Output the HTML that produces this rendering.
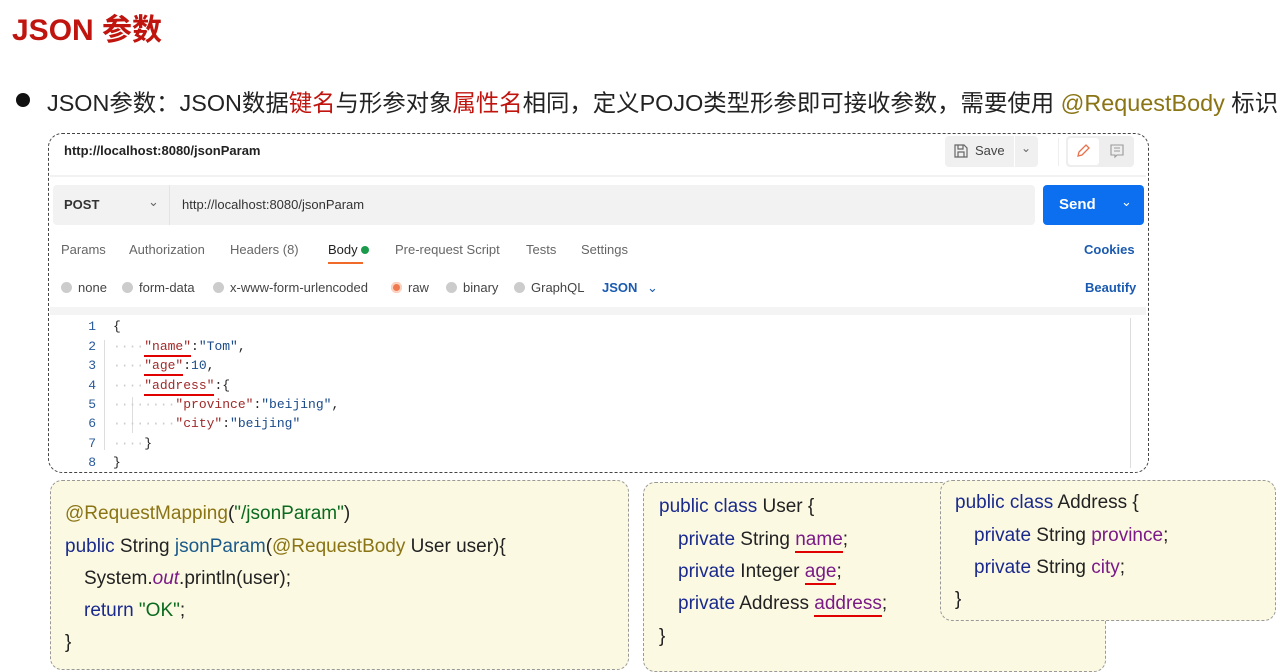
<!DOCTYPE html>
<html><head><meta charset="utf-8"><style>
*{margin:0;padding:0;box-sizing:border-box}
body{width:1287px;height:658px;background:#fff;position:relative;overflow:hidden;font-family:"Liberation Sans","Noto Sans CJK SC",sans-serif;color:#222}
.a{position:absolute;white-space:nowrap}
.mono{font-family:"Liberation Mono","DejaVu Sans Mono",monospace;font-size:13px}
.k{color:#1a2a8c}.an{color:#8a7414}.s{color:#0a6a1e}.p{color:#7b1a86}
.ul{border-bottom:2px solid #e00000;padding-bottom:1px}
.code{font-size:19px;color:#222}
.box{position:absolute;background:#fcf9e3;border:1px dashed #999;border-radius:12px}
.tab{position:absolute;top:242px;font-size:13px;color:#666}
.rad{position:absolute;top:280px;font-size:13px;color:#444}
.rad i{display:inline-block;width:11px;height:11px;border-radius:50%;background:#ccc;margin-right:6px;vertical-align:-1px}
.ln{position:absolute;left:76px;width:20px;text-align:right;color:#2a5a9a}
.jk{color:#a12a2a}.jv{color:#1a4a8a}.dot{color:#ccc}
</style></head><body>
<div class="a" style="left:12px;top:5px;font-size:30px;font-weight:bold;color:#c0140e">JSON 参数</div>
<div class="a" style="left:16px;top:93px;width:14px;height:14px;border-radius:50%;background:#111"></div>
<div class="a" style="left:47px;top:84px;font-size:23.4px;color:#222">JSON参数：JSON数据<span style="color:#c0140e">键名</span>与形参对象<span style="color:#c0140e">属性名</span>相同，定义POJO类型形参即可接收参数，需要使用 <span style="color:#8a7414">@RequestBody</span> 标识</div>

<div class="a" style="left:48px;top:133px;width:1101px;height:340px;border:1px dashed #444;border-radius:14px"></div>
<div class="a" style="left:64px;top:143px;font-size:13px;font-weight:bold;color:#222">http://localhost:8080/jsonParam</div>
<div class="a" style="left:945px;top:136px;width:93px;height:31px;background:#f0f0f0;border-radius:4px"></div>
<div class="a" style="left:1014px;top:136px;width:1px;height:31px;background:#fff"></div>
<svg class="a" style="left:953px;top:143px" width="16" height="16" viewBox="0 0 16 16"><path d="M2 2h9l3 3v9H2z M5 2v4h5V2 M5 14v-5h6v5" fill="none" stroke="#666" stroke-width="1.2"/></svg>
<div class="a" style="left:975px;top:143px;font-size:13px;color:#444">Save</div>
<div class="a" style="left:1021px;top:141px;font-size:12px;color:#666">⌄</div>
<div class="a" style="left:1058px;top:138px;width:1px;height:28px;background:#eee"></div>
<div class="a" style="left:1066px;top:136px;width:68px;height:31px;background:#eee;border-radius:4px"></div>
<div class="a" style="left:1068px;top:138px;width:31px;height:27px;background:#fff;border-radius:3px"></div>
<svg class="a" style="left:1075px;top:143px" width="16" height="16" viewBox="0 0 16 16"><path d="M3 13l1-4 7-7 3 3-7 7z" fill="none" stroke="#e8704a" stroke-width="1.3"/></svg>
<svg class="a" style="left:1109px;top:143px" width="16" height="16" viewBox="0 0 16 16"><path d="M2 2h12v10H8l-2 2v-2H2z M5 5h6 M5 8h6" fill="none" stroke="#999" stroke-width="1.1"/></svg>
<div class="a" style="left:50px;top:175px;width:1096px;height:2px;background:#f2f2f2"></div>
<div class="a" style="left:53px;top:185px;width:982px;height:40px;background:#f2f2f2;border-radius:4px"></div>
<div class="a" style="left:169px;top:185px;width:1px;height:40px;background:#e4e4e4"></div>
<div class="a" style="left:64px;top:197px;font-size:13px;font-weight:bold;color:#333">POST</div>
<div class="a" style="left:148px;top:194px;font-size:13px;color:#666">⌄</div>
<div class="a" style="left:182px;top:197px;font-size:13px;color:#333">http://localhost:8080/jsonParam</div>
<div class="a" style="left:1043px;top:185px;width:101px;height:40px;background:#0b6ff0;border-radius:4px"></div>
<div class="a" style="left:1059px;top:196px;font-size:15px;font-weight:bold;color:#fff">Send</div>
<div class="a" style="left:1121px;top:194px;font-size:13px;color:#fff">⌄</div>
<div class="tab" style="left:61px">Params</div>
<div class="tab" style="left:129px">Authorization</div>
<div class="tab" style="left:230px">Headers (8)</div>
<div class="tab" style="left:328px;color:#222">Body <span style="display:inline-block;width:8px;height:8px;border-radius:50%;background:#1a9a4a"></span></div>
<div class="a" style="left:328px;top:262px;width:35px;height:2px;background:#f06a2a"></div>
<div class="tab" style="left:395px">Pre-request Script</div>
<div class="tab" style="left:526px">Tests</div>
<div class="tab" style="left:581px">Settings</div>
<div class="tab" style="left:1084px;color:#1a5ab0;font-weight:bold">Cookies</div>
<div class="rad" style="left:61px"><i></i>none</div>
<div class="rad" style="left:122px"><i></i>form-data</div>
<div class="rad" style="left:213px"><i></i>x-www-form-urlencoded</div>
<div class="rad" style="left:391px"><i style="background:#f07a50;box-shadow:0 0 0 2px #fbd4c4 inset"></i>raw</div>
<div class="rad" style="left:446px"><i></i>binary</div>
<div class="rad" style="left:514px"><i></i>GraphQL</div>
<div class="rad" style="left:602px;color:#1a5ab0;font-weight:bold">JSON <span style="font-weight:normal;margin-left:6px">⌄</span></div>
<div class="rad" style="left:1085px;color:#1a5ab0;font-weight:bold">Beautify</div>
<div class="a" style="left:50px;top:307px;width:1096px;height:8px;background:#f4f4f4"></div>
<div class="a" style="left:1130px;top:318px;width:1px;height:150px;background:#ddd"></div>
<div class="a" style="left:104px;top:340px;width:1px;height:110px;background:#ddd"></div>
<div class="a" style="left:132px;top:397px;width:1px;height:36px;background:#ddd"></div>
<div class="mono">
<div class="ln" style="top:319px">1</div><div class="ln" style="top:339px">2</div><div class="ln" style="top:358px">3</div><div class="ln" style="top:378px">4</div><div class="ln" style="top:397px">5</div><div class="ln" style="top:416px">6</div><div class="ln" style="top:436px">7</div><div class="ln" style="top:455px">8</div>
<div class="a" style="left:113px;top:319px">{</div>
<div class="a" style="left:113px;top:339px"><span class="dot">····</span><span class="jk ul">"name"</span>:<span class="jv">"Tom"</span>,</div>
<div class="a" style="left:113px;top:358px"><span class="dot">····</span><span class="jk ul">"age"</span>:<span class="jv">10</span>,</div>
<div class="a" style="left:113px;top:378px"><span class="dot">····</span><span class="jk ul">"address"</span>:{</div>
<div class="a" style="left:113px;top:397px"><span class="dot">········</span><span class="jk">"province"</span>:<span class="jv">"beijing"</span>,</div>
<div class="a" style="left:113px;top:416px"><span class="dot">········</span><span class="jk">"city"</span>:<span class="jv">"beijing"</span></div>
<div class="a" style="left:113px;top:436px"><span class="dot">····</span>}</div>
<div class="a" style="left:113px;top:455px">}</div>
</div>
<div class="a" style="left:373px;top:481px;font-size:14px;color:#333">➤</div>

<div class="box" style="left:50px;top:480px;width:579px;height:190px"></div>
<div class="a code" style="left:65px;top:503px"><span class="an">@RequestMapping</span>(<span class="s">"/jsonParam"</span>)</div>
<div class="a code" style="left:65px;top:536px"><span class="k">public</span> String <span style="color:#1a5a8a">jsonParam</span>(<span class="an">@RequestBody</span> User user){</div>
<div class="a code" style="left:84px;top:568px">System.<i class="p">out</i>.println(user);</div>
<div class="a code" style="left:84px;top:600px"><span class="k">return</span> <span class="s">"OK"</span>;</div>
<div class="a code" style="left:65px;top:632px">}</div>

<div class="box" style="left:643px;top:482px;width:463px;height:190px"></div>
<div class="a code" style="left:659px;top:496px"><span class="k">public class</span> User {</div>
<div class="a code" style="left:678px;top:529px"><span class="k">private</span> String <span class="p ul">name</span>;</div>
<div class="a code" style="left:678px;top:561px"><span class="k">private</span> Integer <span class="p ul">age</span>;</div>
<div class="a code" style="left:678px;top:593px"><span class="k">private</span> Address <span class="p ul">address</span>;</div>
<div class="a code" style="left:659px;top:626px">}</div>

<div class="box" style="left:940px;top:480px;width:336px;height:141px"></div>
<div class="a code" style="left:955px;top:492px"><span class="k">public class</span> Address {</div>
<div class="a code" style="left:974px;top:525px"><span class="k">private</span> String <span class="p">province</span>;</div>
<div class="a code" style="left:974px;top:557px"><span class="k">private</span> String <span class="p">city</span>;</div>
<div class="a code" style="left:955px;top:589px">}</div>
</body></html>
